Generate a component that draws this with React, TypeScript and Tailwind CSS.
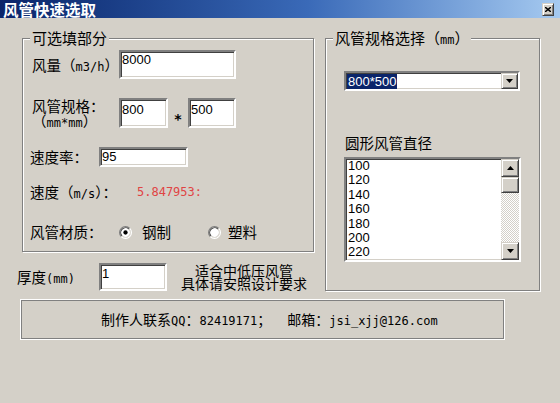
import React from "react";

const sunken =
  "border-2 border-t-[#808080] border-l-[#808080] border-b-white border-r-white shadow-[inset_1px_1px_0_#404040,inset_-1px_-1px_0_#d4d0c8] bg-white";
const raised =
  "border border-t-[#d4d0c8] border-l-[#d4d0c8] border-b-[#404040] border-r-[#404040] shadow-[inset_1px_1px_0_#ffffff,inset_-1px_-1px_0_#808080] bg-[#d4d0c8]";

function A({ children }: { children: React.ReactNode }) {
  return <span className="font-['DejaVu_Sans_Mono',monospace] text-[12px]">{children}</span>;
}

function Field({ className, children }: { className: string; children?: React.ReactNode }) {
  return (
    <div
      className={
        sunken +
        " font-['Liberation_Sans',sans-serif] text-[13px] leading-[15px] pl-[1px] overflow-hidden " +
        className
      }
    >
      {children}
    </div>
  );
}

function Group({
  legend,
  className,
  children,
}: {
  legend: React.ReactNode;
  className: string;
  children?: React.ReactNode;
}) {
  return (
    <div
      className={
        "relative border border-[#808080] shadow-[inset_1px_1px_0_#ffffff,1px_1px_0_#ffffff] " + className
      }
    >
      <span className="absolute -top-[10px] left-[7px] px-[2px] bg-[#d4d0c8] leading-[18px] text-[15px] whitespace-nowrap">
        {legend}
      </span>
      {children}
    </div>
  );
}

function Arrow({ up }: { up?: boolean }) {
  return (
    <svg width="7" height="4" viewBox="0 0 7 4">
      {up ? <path d="M3.5 0 L7 4 L0 4 Z" fill="#000" /> : <path d="M0 0 L7 0 L3.5 4 Z" fill="#000" />}
    </svg>
  );
}

function Radio({ checked }: { checked?: boolean }) {
  return (
    <svg width="13" height="13" viewBox="0 0 12 12" className="shrink-0">
      <circle cx="6" cy="6" r="5" fill="#fff" />
      <path d="M2.11 9.89 A5.5 5.5 0 0 1 9.89 2.11" stroke="#808080" fill="none" />
      <path d="M9.89 2.11 A5.5 5.5 0 0 1 2.11 9.89" stroke="#ffffff" fill="none" />
      <path d="M2.82 9.18 A4.5 4.5 0 0 1 9.18 2.82" stroke="#404040" fill="none" />
      <path d="M9.18 2.82 A4.5 4.5 0 0 1 2.82 9.18" stroke="#d4d0c8" fill="none" />
      {checked && <circle cx="6" cy="6" r="2" fill="#000" />}
    </svg>
  );
}

export default function App() {
  const sizes = ["100", "120", "140", "160", "180", "200", "220"];
  return (
    <div className="w-[560px] h-[403px] bg-[#d4d0c8] overflow-hidden text-black font-['Noto_Sans_CJK_SC',sans-serif] text-[14.5px]">
      {/* title bar */}
      <div className="h-[18px] flex items-center justify-between bg-linear-to-r from-[#0a246a] via-[#3a6ab8] via-55% to-[#a6caf0] pl-[3px] pr-[6px]">
        <span className="text-white font-bold text-[15.5px] leading-[18px]">风管快速选取</span>
        <div className={raised + " w-[12px] h-[13px] flex items-center justify-center"}>
          <svg width="6" height="5" viewBox="0 0 6 5">
            <path d="M0 0 L6 5 M6 0 L0 5" stroke="#000" strokeWidth="1.4" />
          </svg>
        </div>
      </div>

      <div className="flex pl-[17px] mt-[20px]">
        <div className="flex flex-col">
          <Group legend="可选填部分" className="ml-[5px] w-[292px] h-[214px] flex flex-col">
            {/* 风量 */}
            <div className="flex items-center mt-[11px] h-[29px]">
              <div className="w-[96px] pl-[9px] whitespace-nowrap">
                风量（<A>m3/h</A>）
              </div>
              <Field className="w-[117px] h-[29px]">8000</Field>
            </div>
            {/* 风管规格 */}
            <div className="flex items-center mt-[19px] h-[30px]">
              <div className="w-[96px] pl-[9px] flex flex-col whitespace-nowrap">
                <span className="leading-[15px] h-[15px]">风管规格：</span>
                <span className="leading-[15px] h-[15px]">
                  （<A>mm*mm</A>）
                </span>
              </div>
              <Field className="w-[49px] h-[30px] pt-[2px]">800</Field>
              <span className="w-[20px] text-center pt-[12px] font-['DejaVu_Sans_Mono',monospace] text-[14px] font-bold">
                *
              </span>
              <Field className="w-[48px] h-[30px] pt-[2px]">500</Field>
            </div>
            {/* 速度率 */}
            <div className="flex items-center mt-[19px] h-[20px]">
              <div className="w-[76px] pl-[7px] whitespace-nowrap">速度率：</div>
              <Field className="w-[89px] h-[20px]">95</Field>
            </div>
            {/* 速度 */}
            <div className="flex items-center mt-[16px] h-[18px]">
              <div className="w-[114px] pl-[7px] whitespace-nowrap">
                速度（<A>m/s</A>）：
              </div>
              <span className="font-['DejaVu_Sans_Mono',monospace] text-[12px] text-[#e04444]">5.847953:</span>
            </div>
            {/* 材质 */}
            <div className="flex items-center mt-[22px] h-[18px]">
              <div className="w-[96px] pl-[7px] whitespace-nowrap">风管材质：</div>
              <Radio checked />
              <span className="ml-[10px]">钢制</span>
              <span className="ml-[37px] flex items-center">
                <Radio />
              </span>
              <span className="ml-[7px]">塑料</span>
            </div>
          </Group>

          <div className="flex items-center mt-[11px] h-[28px]">
            <div className="w-[82px] whitespace-nowrap">
              厚度<A>(mm)</A>
            </div>
            <Field className="w-[68px] h-[28px] pt-[1px]">1</Field>
            <div className="ml-[11px] w-[132px] flex flex-col items-center text-[14px] whitespace-nowrap">
              <span className="leading-[13px] h-[13px]">适合中低压风管</span>
              <span className="leading-[13px] h-[13px]">具体请安照设计要求</span>
            </div>
          </div>
        </div>

        <Group
          legend={
            <>
              风管规格选择（<A>mm</A>）
            </>
          }
          className="ml-[11px] w-[215px] h-[253px] flex flex-col"
        >
          {/* combo */}
          <div className={sunken + " mt-[32px] ml-[18px] w-[176px] h-[20px] flex items-center"}>
            <div className="flex-1 flex items-center pl-[1px]">
              <span className="bg-[#0a246a] text-white px-[1px] leading-[15px] font-['Liberation_Sans',sans-serif] text-[13px]">
                800*500
              </span>
            </div>
            <div className={raised + " w-[17px] h-[16px] flex items-center justify-center"}>
              <Arrow />
            </div>
          </div>

          <div className="mt-[43px] ml-[19px] leading-[18px]">圆形风管直径</div>

          {/* listbox */}
          <div className={sunken + " mt-[5px] ml-[18px] w-[177px] h-[105px] flex"}>
            <div className="flex-1 overflow-hidden pl-[2px] font-['Liberation_Sans',sans-serif] text-[13px] leading-[14.4px]">
              {sizes.map((s) => (
                <div key={s}>{s}</div>
              ))}
            </div>
            <div className="w-[18px] flex flex-col">
              <div className={raised + " h-[18px] flex items-center justify-center"}>
                <Arrow up />
              </div>
              <div className={raised + " h-[16px]"} />
              <div className="flex-1 bg-[image:repeating-conic-gradient(#ffffff_0%_25%,#d4d0c8_0%_50%)] bg-[length:2px_2px]" />
              <div className={raised + " h-[18px] flex items-center justify-center"}>
                <Arrow />
              </div>
            </div>
          </div>
        </Group>
      </div>

      {/* footer */}
      <div className="mt-[8px] ml-[20px] w-[485px] h-[41px] border border-white shadow-[inset_0_0_0_1px_#808080] flex items-center pl-[80px] text-[14px] whitespace-nowrap">
        <span>
          制作人联系<A>QQ</A>：<A>82419171</A>；
        </span>
        <span className="ml-[16px]">
          邮箱：<A>jsi_xjj@126.com</A>
        </span>
      </div>
    </div>
  );
}
